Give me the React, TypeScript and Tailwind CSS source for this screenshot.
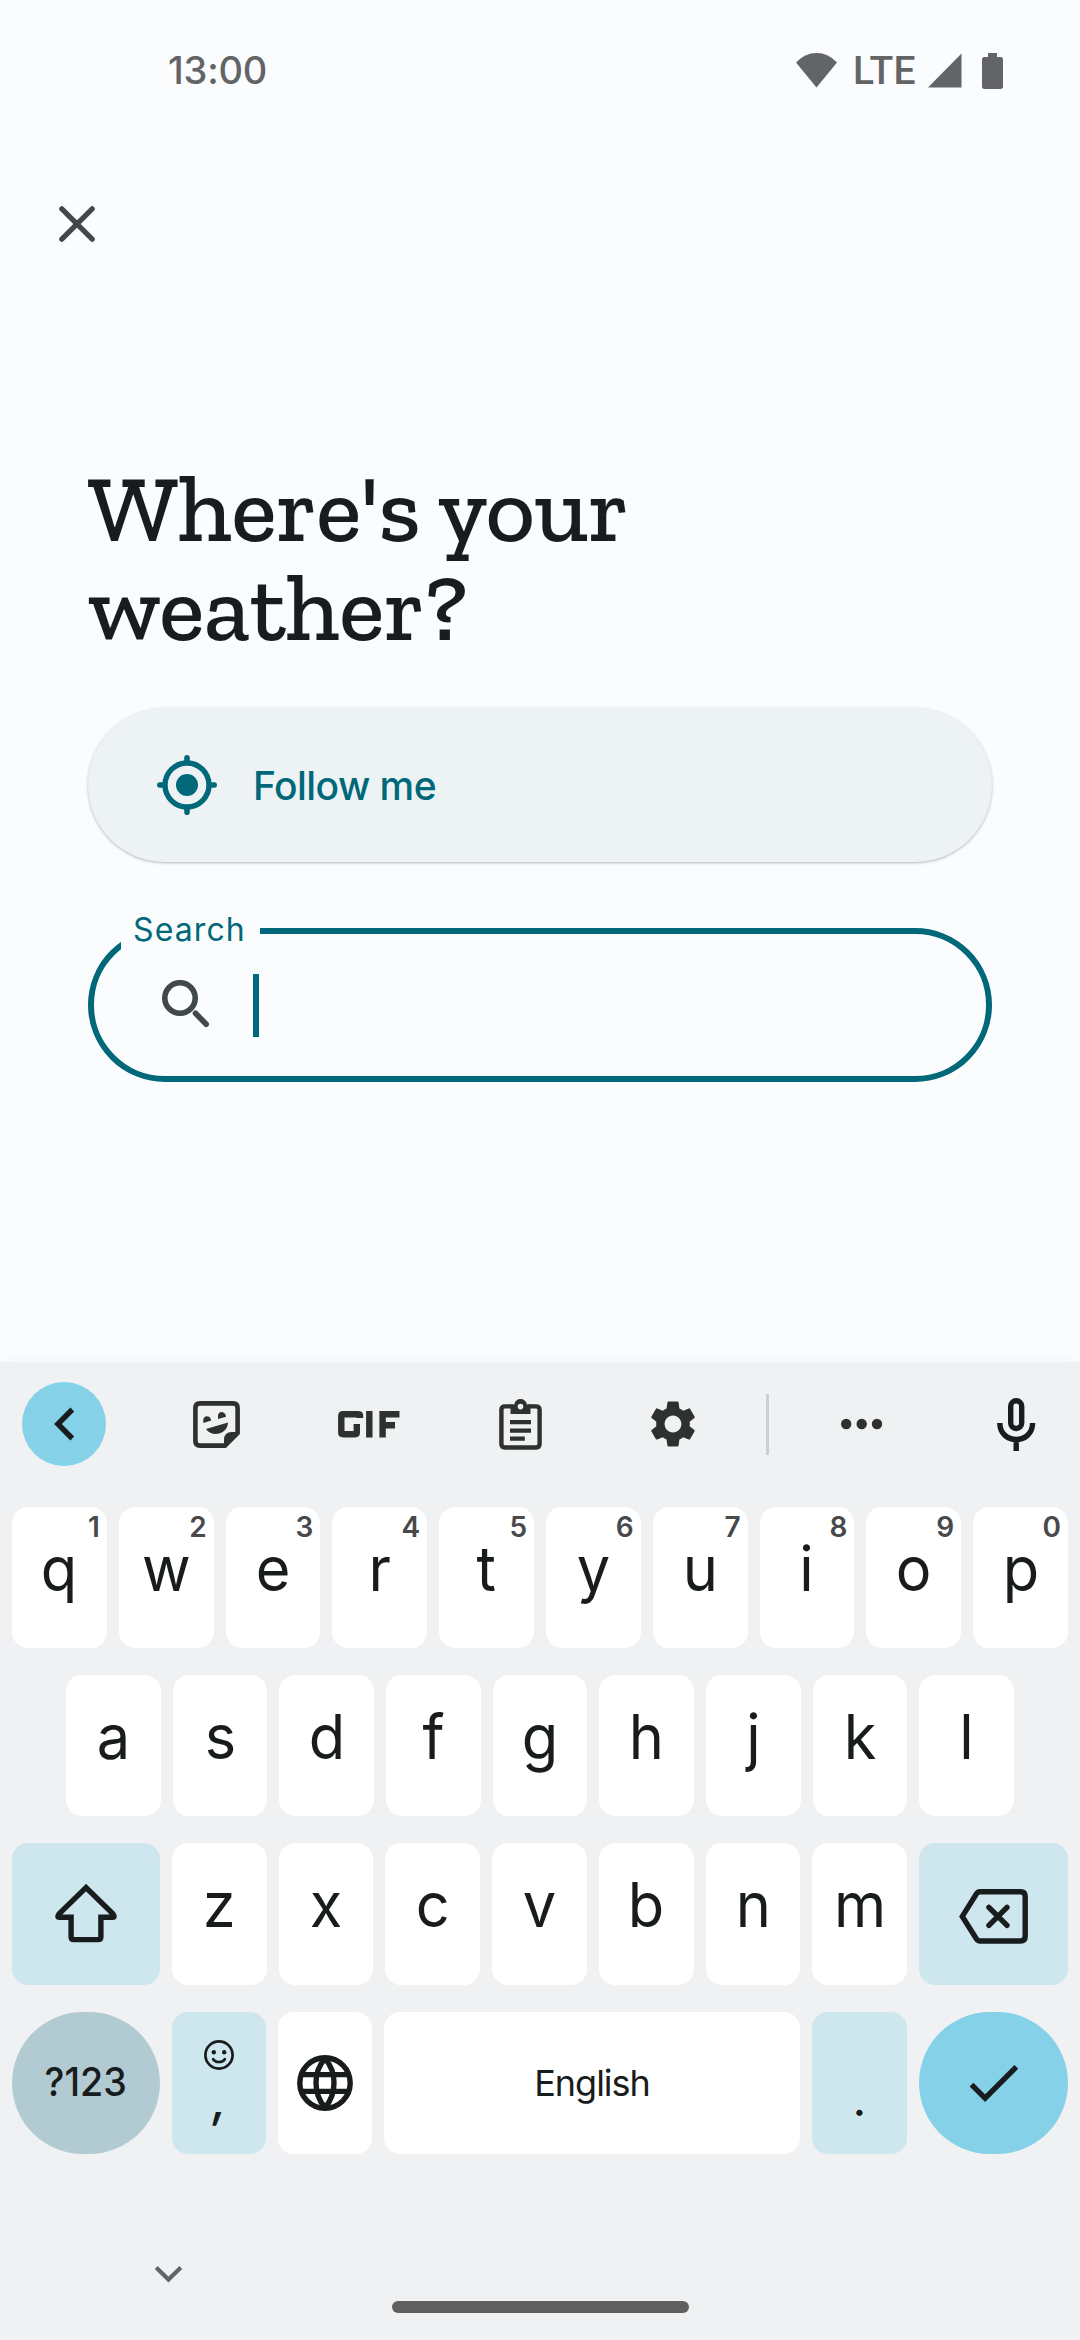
import type { ReactNode } from "react";
import { MdSettings } from "react-icons/md";

function StatusBar() {
  return (
    <header className="flex h-[142px] items-start justify-between pl-[168px] pr-[77px] pt-[48px] text-[#636466]">
      <span className="font-['Google_Sans','Inter',sans-serif] text-[38px] font-medium leading-[45px] tracking-[-0.2px]">13:00</span>
      <div className="flex items-start">
        <svg className="mt-[5px] h-[35px] w-[41px]" viewBox="0 0 41 35" fill="currentColor">
          <path d="M0 9.6Q8.5 0 20.5 0T41 9.6L20.5 34.4Z" />
        </svg>
        <span className="ml-[16px] w-[75px] font-['Roboto',sans-serif] text-[39px] font-medium leading-[46px] tracking-[0.2px]">LTE</span>
        <svg className="mt-[5px] h-[35px] w-[34px]" viewBox="0 0 34 35" fill="currentColor">
          <path d="M0 34.5 33.5.5V34.5Z" />
        </svg>
        <svg className="ml-[20px] mt-[5px] h-[36px] w-[21px]" viewBox="0 0 21 36" fill="currentColor">
          <path d="M6 0H15V4H18.5Q21 4 21 6.5V33.5Q21 36 18.5 36H2.5Q0 36 0 33.5V6.5Q0 4 2.5 4H6Z" />
        </svg>
      </div>
    </header>
  );
}

function LocationForm() {
  return (
    <main className="flex flex-col px-[88px]">
      <h1 className="w-[640px] font-['Zilla_Slab','DejaVu_Serif',serif] text-[95px] font-medium leading-[99px] tracking-[-0.3px] text-[#191c1d]">
        Where's your weather?
      </h1>

      <button className="mt-[51px] flex h-[154px] items-center rounded-full bg-[#edf3f5] pl-[69px] text-[#006879] shadow-[0_1px_3px_rgba(0,0,0,0.28)]">
        <svg className="h-[60px] w-[60px]" viewBox="0 0 60 60" fill="none" stroke="currentColor">
          <circle cx="30" cy="30" r="22" strokeWidth="5.4" />
          <circle cx="30" cy="30" r="11" fill="currentColor" stroke="none" />
          <path d="M30 2.8V6M30 54v3.2M2.8 30H6M54 30h3.2" strokeWidth="5.6" strokeLinecap="round" />
        </svg>
        <span className="ml-[36px] pt-[2px] font-['Inter',sans-serif] text-[39px] font-medium leading-[48px] tracking-[-0.55px]">Follow me</span>
      </button>

      <div className="relative mt-[66px] flex h-[154px] items-center rounded-full border-[6px] border-[#006879] pl-[66px]">
        <label className="absolute -top-[30px] left-[27px] w-[139px] bg-[#fbfcfe] pl-[12px] font-['Inter',sans-serif] text-[32px] leading-[52px] tracking-[1.1px] text-[#006879]">
          Search
        </label>
        <svg className="h-[60px] w-[54px]" viewBox="160 975 54 60" fill="none" stroke="#40484b">
          <circle cx="180" cy="998" r="15.2" strokeWidth="5.6" />
          <path d="M195.5 1013.3 206.2 1024.2" strokeWidth="5.6" strokeLinecap="round" />
        </svg>
        <span className="ml-[39px] h-[63px] w-[6px] bg-[#006879]" />
      </div>
    </main>
  );
}

function Toolbar() {
  return (
    <div className="flex h-[84px] items-center text-[#2f3030]">
      <button className="ml-[22px] flex h-[84px] w-[84px] items-center justify-center rounded-full bg-[#85d1e7]">
        <svg className="h-[34px] w-[24px]" viewBox="51 1407 24 34" fill="none" stroke="#191c1d" strokeWidth="5.4">
          <path d="M71.3 1409.5 56.9 1424 71.3 1438.5" />
        </svg>
      </button>
      <svg className="ml-[87px] h-[47px] w-[47px]" viewBox="0 0 47 47" fill="currentColor">
        <path d="M7 2.4H40Q44.6 2.4 44.6 7V32L32 44.6H7Q2.4 44.6 2.4 40V7Q2.4 2.4 7 2.4Z" fill="none" stroke="currentColor" strokeWidth="4.6" />
        <path d="M31 44V39Q31 31 39 31H45V34L33.5 45Z" />
        <path d="M10.3 22V19C10.3 13.8 17.6 13.8 18.3 19.6ZM25 18V14.9C25 9.9 32.3 9.5 33 15.8ZM13 28 35 21.5C34.5 33.5 19 37 13 28Z" />
      </svg>
      <svg className="ml-[98px] h-[27px] w-[62px]" viewBox="0 0 62 27" fill="none" stroke="currentColor" strokeWidth="6.4">
        <path d="M22 7V4.5Q22 3.3 20 3.3H5.2Q3.3 3.3 3.3 5V21.5Q3.3 23.2 5.2 23.2H17Q18.8 23.2 18.8 21.5V13" />
        <path d="M31.3 0V26.5M44.6 26.5V3.3H61.5M45 14.3H57" />
      </svg>
      <svg className="ml-[99px] h-[51px] w-[43px]" viewBox="0 0 43 51" fill="none" stroke="currentColor">
        <path d="M14 7.4H6Q2.4 7.4 2.4 10.8V45Q2.4 48.5 6 48.5H37Q40.6 48.5 40.6 45V10.8Q40.6 7.4 37 7.4H29" strokeWidth="4.4" />
        <path fillRule="evenodd" d="M11.5 15V5.5H15.2Q16.5 0 21.5 0T28 5.5H31.5V15ZM21.5 4.8A2.8 2.8 0 1 0 21.5 10.4 2.8 2.8 0 1 0 21.5 4.8Z" fill="currentColor" stroke="none" />
        <path d="M11 23.2H32M11 31.6H32M11 39.7H25.8" strokeWidth="4.2" />
      </svg>
      <MdSettings className="ml-[103px] h-[56px] w-[56px]" />
      <span className="ml-[65px] h-[61px] w-[3px] bg-[#cccecf]" />
      <svg className="ml-[72px] h-[12px] w-[42px]" viewBox="0 0 42 12" fill="currentColor">
        <circle cx="5.2" cy="6" r="5.2" />
        <circle cx="20.7" cy="6" r="5.2" />
        <circle cx="36" cy="6" r="5.2" />
      </svg>
      <svg className="ml-[114px] h-[53px] w-[39px]" viewBox="0 0 39 53" fill="none" stroke="#191c1d" strokeWidth="5.4">
        <rect x="13.7" y="2.7" width="11" height="27.8" rx="5.5" />
        <path d="M2.8 25C2.8 47 35.6 47 35.6 25M19.2 41V53" />
      </svg>
    </div>
  );
}

function Key({ label, hint }: { label: string; hint?: string }) {
  return (
    <button className="relative flex min-w-0 flex-1 items-start justify-center rounded-[16px] bg-white pt-[24px] text-[#191c1d]">
      <span className="scale-x-[0.96] text-[62px] leading-[76px]">{label}</span>
      {hint && (
        <span className="absolute right-[7px] top-[3px] text-[28px] font-semibold leading-[35px] text-[#48494b]">{hint}</span>
      )}
    </button>
  );
}

function Row({ className, children }: { className: string; children: ReactNode }) {
  return <div className={"flex gap-[12px] " + className}>{children}</div>;
}

function Keyboard() {
  return (
    <section className="flex h-[978px] flex-col bg-[#eff1f3] pt-[20px] font-['Google_Sans','Inter',sans-serif] shadow-[0_-1px_12px_rgba(0,0,0,0.035)]">
      <Toolbar />
      <Row className="mt-[41px] h-[141px] px-[12px]">
        {"qwertyuiop".split("").map((c, i) => (
          <Key key={c} label={c} hint={String((i + 1) % 10)} />
        ))}
      </Row>
      <Row className="mt-[27px] h-[141px] px-[66px]">
        {"asdfghjkl".split("").map((c) => (
          <Key key={c} label={c} />
        ))}
      </Row>
      <Row className="mt-[27px] h-[142px] px-[12px]">
        <button className="flex w-[148px] items-start justify-center rounded-[16px] bg-[#cee7ee] pt-[40px]">
          <svg className="h-[62px] w-[62px]" viewBox="54.7 1883 62 62" fill="none" stroke="#191c1d" strokeWidth="5.4">
            <path d="M85.7 1887.6 58.8 1913.8Q56.2 1917.2 59.2 1917.2H70.8V1937Q70.8 1939.6 73.4 1939.6H98Q100.6 1939.6 100.6 1937V1917.2H112.2Q115.2 1917.2 112.6 1913.8Z" />
          </svg>
        </button>
        {"zxcvbnm".split("").map((c) => (
          <Key key={c} label={c} />
        ))}
        <button className="flex w-[149px] items-start justify-center rounded-[16px] bg-[#cee7ee] pt-[46px]">
          <svg className="h-[55px] w-[70px]" viewBox="958 1889 70 55" fill="none" stroke="#191c1d" strokeWidth="5.4">
            <path d="M979 1891.8H1019.5Q1024.2 1891.8 1024.2 1896.5V1936.2Q1024.2 1941 1019.5 1941H979Q976.8 1941 975.3 1938.8L961.3 1916.4 975.3 1894Q976.8 1891.8 979 1891.8Z" />
            <path d="M987.9 1907.3 1006 1925.4M1006 1907.3 987.9 1925.4" strokeLinecap="round" />
          </svg>
        </button>
      </Row>
      <Row className="mt-[27px] h-[142px] px-[12px] text-[#191c1d]">
        <button className="flex w-[148px] items-center justify-center rounded-[71px] bg-[#b2cad1] text-[40px] font-medium">
          <span className="-mt-[3px] scale-x-[0.94]">?123</span>
        </button>
        <button className="flex w-[94px] flex-col items-center rounded-[16px] bg-[#cee7ee] pt-[28px]">
          <svg className="h-[30px] w-[30px]" viewBox="1 1 30 30" fill="none" stroke="currentColor" strokeWidth="2.7">
            <circle cx="16" cy="16" r="13.6" />
            <circle cx="10.8" cy="13.2" r="2.2" fill="currentColor" stroke="none" />
            <circle cx="21.2" cy="13.2" r="2.2" fill="currentColor" stroke="none" />
            <path d="M10.2 20.2Q12 23 16 23T21.8 20.2" strokeLinecap="round" />
          </svg>
          <span className="mt-[1px] -skew-x-6 text-[48px] font-medium leading-[58px]">,</span>
        </button>
        <button className="flex w-[94px] items-center justify-center rounded-[16px] bg-white">
          <svg className="h-[56px] w-[56px]" viewBox="0 0 56 56" fill="none" stroke="currentColor" strokeWidth="5.4">
            <circle cx="28" cy="28" r="25.2" />
            <path d="M3 19.6H53M3 36.4H53M28 3.5C16 17 16 39 28 52.5C40 39 40 17 28 3.5Z" />
          </svg>
        </button>
        <button className="flex min-w-0 flex-1 items-center justify-center rounded-[16px] bg-white text-[36px]">
          <span className="-mt-[1px] tracking-[-1px]">English</span>
        </button>
        <button className="flex w-[95px] items-start justify-center rounded-[16px] bg-[#cee7ee] pt-[59px] text-[48px] leading-[56px]">.</button>
        <button className="flex w-[149px] items-center justify-center rounded-[71px] bg-[#85d1e7]">
          <svg className="h-[40px] w-[50px]" viewBox="968.5 2063.5 50 40" fill="none" stroke="currentColor" strokeWidth="5.4">
            <path d="M971 2085.2 984.6 2098.6 1015.8 2067.4" />
          </svg>
        </button>
      </Row>
      <svg className="ml-[154px] mt-[110px] h-[20px] w-[29px]" viewBox="154 2264 29 20" fill="none" stroke="#636466" strokeWidth="4.2">
        <path d="M156.2 2267.5 168.5 2279.6 180.8 2267.5" />
      </svg>
      <span className="mx-auto mt-[17px] h-[12px] w-[297px] rounded-full bg-[#606060]" />
    </section>
  );
}

export default function App() {
  return (
    <div className="flex h-[2340px] w-[1080px] flex-col overflow-hidden bg-[#fbfcfe]">
      <StatusBar />
      <button className="ml-[59px] mt-[64px] h-[36px] w-[36px]">
        <svg className="h-[36px] w-[36px]" viewBox="0 0 36 36" fill="none" stroke="#40484b" strokeWidth="5.2" strokeLinecap="round">
          <path d="M2.8 2.8 33.2 33.2M33.2 2.8 2.8 33.2" />
        </svg>
      </button>
      <div className="mt-[217px] flex-1">
        <LocationForm />
      </div>
      <Keyboard />
    </div>
  );
}
